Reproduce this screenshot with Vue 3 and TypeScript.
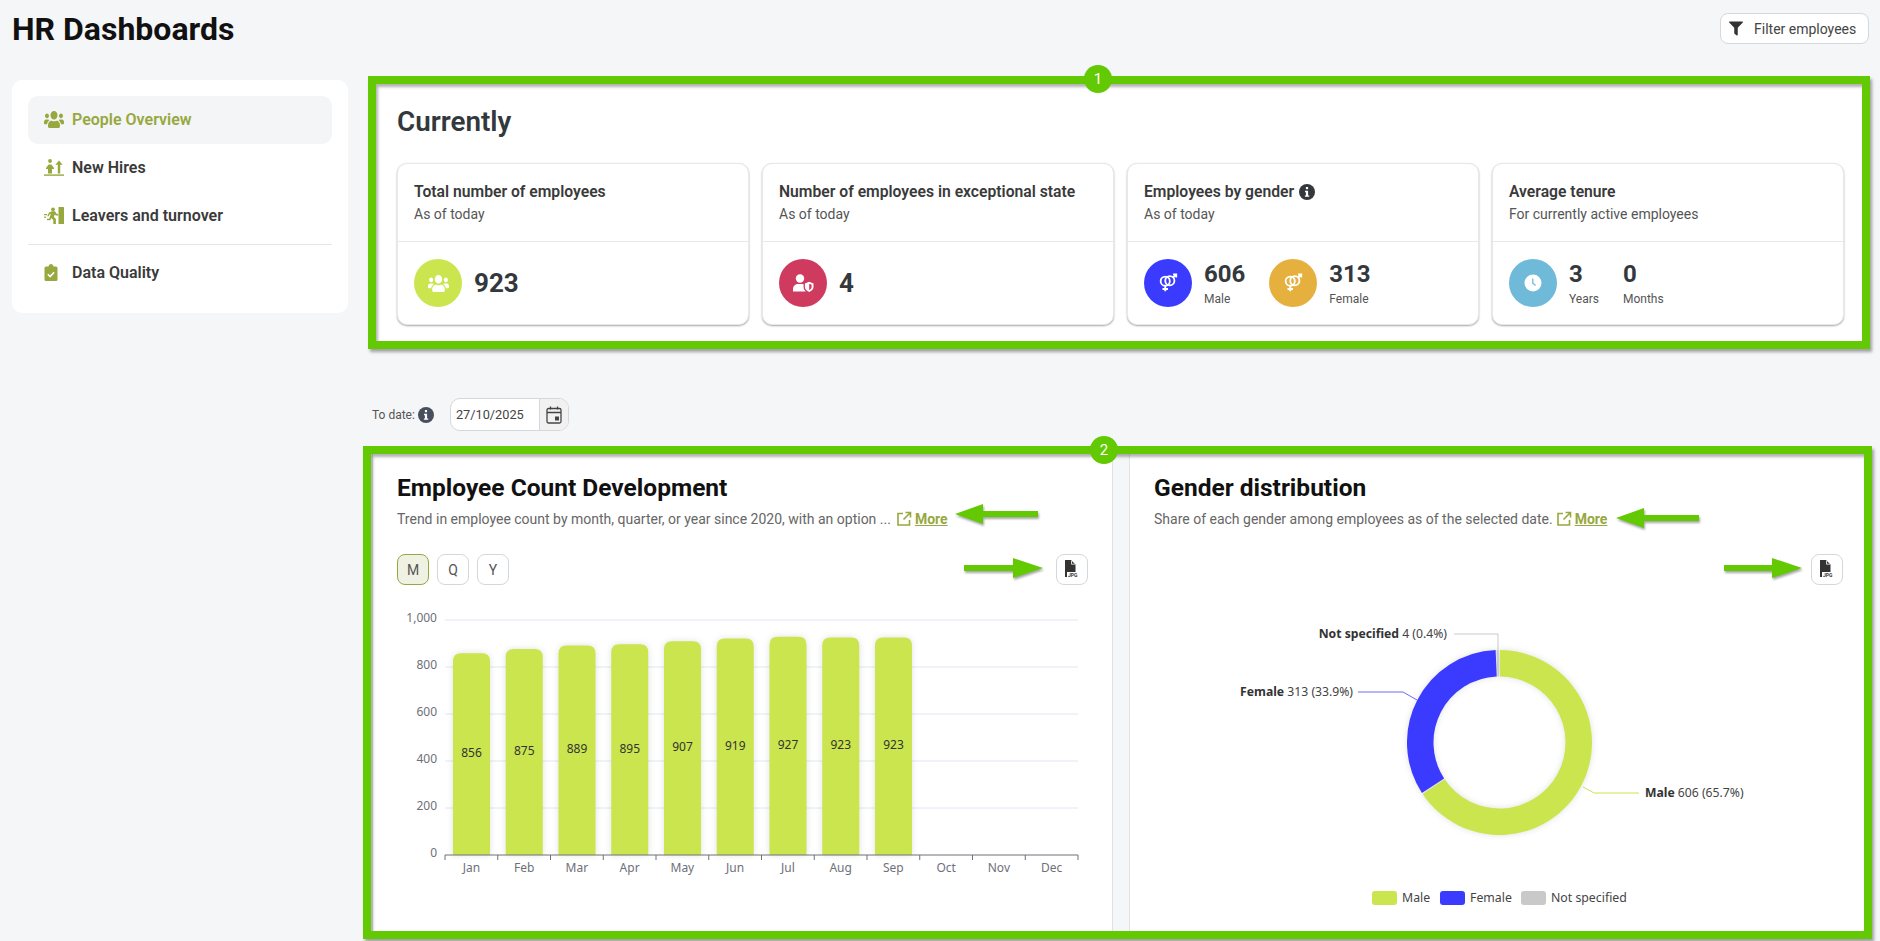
<script setup lang="ts">
const usersPath = 'M96 224c35.3 0 64-28.7 64-64s-28.7-64-64-64-64 28.7-64 64 28.7 64 64 64zm448 0c35.3 0 64-28.7 64-64s-28.7-64-64-64-64 28.7-64 64 28.7 64 64 64zm32 32h-64c-17.6 0-33.5 7.1-45.1 18.6 40.3 22.1 68.9 62 75.1 109.4h66c17.7 0 32-14.3 32-32v-32c0-35.3-28.7-64-64-64zm-256 0c61.9 0 112-50.1 112-112S381.9 32 320 32 208 82.1 208 144s50.1 112 112 112zm76.8 32h-8.3c-20.8 10-43.9 16-68.5 16s-47.6-6-68.5-16h-8.3C179.6 288 128 339.6 128 403.2V432c0 26.5 21.5 48 48 48h288c26.5 0 48-21.5 48-48v-28.8c0-63.6-51.6-115.2-115.2-115.2zm-223.7-13.4C161.5 263.1 145.6 256 128 256H64c-35.3 0-64 28.7-64 64v32c0 17.7 14.3 32 32 32h65.9c6.3-47.4 34.9-87.3 75.2-109.4z'

const months = ['Jan', 'Feb', 'Mar', 'Apr', 'May', 'Jun', 'Jul', 'Aug', 'Sep', 'Oct', 'Nov', 'Dec']
const values = [856, 875, 889, 895, 907, 919, 927, 923, 923]
const chartLeft = 48
const band = 52.75
const zeroY = 254
const pxPerUnit = 0.235

const gridLines = [0, 200, 400, 600, 800, 1000].map((v) => ({
  y: zeroY - v * pxPerUnit,
  label: v === 1000 ? '1,000' : String(v),
  value: v,
}))

const bars = values.map((v, i) => {
  const x = chartLeft + band * i + 8
  const h = v * pxPerUnit + 0.5
  const top = zeroY - h
  const w = 37
  const r = 8
  return {
    value: v,
    cx: x + w / 2,
    cy: top + h / 2,
    d: `M${x} ${zeroY}V${top + r}Q${x} ${top} ${x + r} ${top}H${x + w - r}Q${x + w} ${top} ${x + w} ${top + r}V${zeroY}Z`,
  }
})

function polar(cx: number, cy: number, r: number, deg: number): [number, number] {
  const a = ((deg - 90) * Math.PI) / 180
  return [cx + r * Math.cos(a), cy + r * Math.sin(a)]
}

function ring(start: number, end: number): string {
  const cx = 345.5
  const cy = 141.5
  const R = 92.5
  const r = 66
  const large = end - start > 180 ? 1 : 0
  const [a1, a2] = polar(cx, cy, R, start)
  const [b1, b2] = polar(cx, cy, R, end)
  const [c1, c2] = polar(cx, cy, r, end)
  const [d1, d2] = polar(cx, cy, r, start)
  return `M${a1} ${a2}A${R} ${R} 0 ${large} 1 ${b1} ${b2}L${c1} ${c2}A${r} ${r} 0 ${large} 0 ${d1} ${d2}Z`
}

const segments = [
  { color: '#cbe54e', d: ring(0.3, 236.2) },
  { color: '#3b3bff', d: ring(237, 357.6) },
  { color: '#c9c9c9', d: ring(358.2, 359.6) },
]

const legend = [
  { color: '#cbe54e', label: 'Male', x: 218, tx: 248 },
  { color: '#3b3bff', label: 'Female', x: 286, tx: 316 },
  { color: '#c9c9c9', label: 'Not specified', x: 367, tx: 397 },
]

const arrows = [
  { tip: 583, tail: 666, y: 64, dir: -1, head: 28 },
  { tip: 671, tail: 592, y: 118, dir: 1, head: 30 },
  { tip: 1244, tail: 1327, y: 68, dir: -1, head: 28 },
  { tip: 1430, tail: 1352, y: 118, dir: 1, head: 30 },
]

function arrowPath(a: { tip: number; tail: number; y: number; dir: number; head: number }): string {
  const base = a.tip - a.dir * a.head
  return `M${a.tail} ${a.y - 3}H${base}V${a.y - 10}L${a.tip} ${a.y}L${base} ${a.y + 10}V${a.y + 3}H${a.tail}Z`
}
</script>

<template>
  <div class="page">
    <header class="top">
      <h1 class="page-title">HR Dashboards</h1>
      <button class="filter-btn">
        <svg class="filter-icon" viewBox="0 0 512 512"><path d="M487.976 0H24.028C2.71 0-8.047 25.866 7.058 40.971L192 225.941V432c0 7.831 3.821 15.17 10.237 19.662l80 55.98C298.02 518.69 320 507.493 320 487.98V225.941l184.947-184.97C520.021 25.896 509.338 0 487.976 0z" /></svg>
        Filter employees
      </button>
    </header>

    <div class="layout">
      <nav class="side">
        <a class="nav-item active">
          <svg class="nav-icon" viewBox="0 32 640 448" preserveAspectRatio="none"><path :d="usersPath" /></svg>
          People Overview
        </a>
        <a class="nav-item">
          <svg class="nav-icon" viewBox="0 0 20 17">
            <circle cx="6" cy="2" r="1.9" />
            <path d="M2 9l2.6-3.4h2.8L10 9v1H8v4.4H4V10H2z" />
            <path d="M15 1.500l3.600 4.300h-2.400v8.600h-2.400V5.800h-2.400z" />
            <rect x="0" y="15.400" width="20" height="1.400" />
          </svg>
          New Hires
        </a>
        <a class="nav-item">
          <svg class="nav-icon" viewBox="0 0 20 17">
            <rect x="14.500" y="0" width="5.500" height="17" rx="0.5" />
            <circle cx="9" cy="2.300" r="1.900" />
            <path d="M5 5.500l3-1.300h3l1.800 2.800h1.500v1.500h-2.500l-1-1.200-.9 2.700 2 2v5H9.300v-4.100L7.300 11l-1 2.300H3v-1.600h2.200l1.700-5-1.200.6-1 2H3.200z" />
            <rect x="0" y="7" width="3" height="1.200" />
            <rect x="0" y="9.600" width="2" height="1.200" />
          </svg>
          Leavers and turnover
        </a>
        <hr class="nav-sep" />
        <a class="nav-item">
          <svg class="nav-icon" viewBox="0 0 20 17">
            <path d="M2 2.500h2.500C4.800 1 5.800 0 7 0s2.200 1 2.500 2.500H12a1.500 1.500 0 0 1 1.500 1.500v11.500A1.500 1.500 0 0 1 12 17H2a1.500 1.500 0 0 1-1.500-1.500V4A1.500 1.500 0 0 1 2 2.500z" />
            <path d="M3.800 10.300l2.300 2.300 4-4.400" fill="none" stroke="#fff" stroke-width="1.600" />
          </svg>
          Data Quality
        </a>
      </nav>

      <main class="main">
        <section class="panel current">
          <span class="frame frame-one"></span>
          <span class="badge badge-one">1</span>
          <h2 class="current-title">Currently</h2>
          <div class="kpis">
            <article class="kpi">
              <div class="kpi-head">
                <h3>Total number of employees</h3>
                <p>As of today</p>
              </div>
              <div class="kpi-body">
                <span class="disc lime">
                  <svg width="21" height="17" viewBox="0 32 640 448" preserveAspectRatio="none" fill="#fff"><path :d="usersPath" /></svg>
                </span>
                <strong class="big">923</strong>
              </div>
            </article>

            <article class="kpi">
              <div class="kpi-head">
                <h3>Number of employees in exceptional state</h3>
                <p>As of today</p>
              </div>
              <div class="kpi-body">
                <span class="disc crimson">
                  <svg width="22" height="18" viewBox="0 0 22 18" fill="#fff">
                    <circle cx="8" cy="4.500" r="4.200" />
                    <path d="M1 17.500v-2.500c0-3 2.500-5 5-5h4c.6 0 1.100.1 1.600.3V13c0 1.900.8 3.400 2.200 4.500z" />
                    <path d="M17.200 7.800l4.300 1.700v3.400c0 2.300-1.700 4-4.300 5-2.600-1-4.300-2.700-4.300-5V9.500z" />
                    <path d="M17.200 9.800l2.400 1v2.100c0 1.300-.9 2.300-2.400 3z" fill="#cf3a5f" />
                  </svg>
                </span>
                <strong class="big">4</strong>
              </div>
            </article>

            <article class="kpi">
              <div class="kpi-head">
                <h3>
                  Employees by gender
                  <svg class="info dark" viewBox="0 0 16 16"><circle cx="8" cy="8" r="8" /><rect x="6.900" y="3" width="2.200" height="2.200" fill="#fff" /><path d="M6 6.800h3.100v4.600H10.200v1.400H5.900v-1.400h1V8.200H6z" fill="#fff" /></svg>
                </h3>
                <p>As of today</p>
              </div>
              <div class="kpi-body stats">
                <div class="stat">
                  <span class="disc blue">
                    <svg class="gender" viewBox="0 0 24 24"><circle cx="9" cy="10" r="5" /><circle cx="14" cy="9.500" r="5" /><path d="M9 15v6M6 18.500h6M17.500 6L21 2.500M17.500 2.500H21V6" /></svg>
                  </span>
                  <div class="stat-text"><strong>606</strong><small>Male</small></div>
                </div>
                <div class="stat">
                  <span class="disc amber">
                    <svg class="gender" viewBox="0 0 24 24"><circle cx="9" cy="10" r="5" /><circle cx="14" cy="9.500" r="5" /><path d="M9 15v6M6 18.500h6M17.500 6L21 2.500M17.500 2.500H21V6" /></svg>
                  </span>
                  <div class="stat-text"><strong>313</strong><small>Female</small></div>
                </div>
              </div>
            </article>

            <article class="kpi">
              <div class="kpi-head">
                <h3>Average tenure</h3>
                <p>For currently active employees</p>
              </div>
              <div class="kpi-body stats">
                <div class="stat">
                  <span class="disc sky">
                    <svg width="18" height="18" viewBox="0 0 18 18"><circle cx="9" cy="9" r="8.500" fill="#fff" /><path d="M8.800 4.500V9.300l2.800 2.200" fill="none" stroke="#6fb9d9" stroke-width="1.300" /></svg>
                  </span>
                  <div class="stat-text"><strong>3</strong><small>Years</small></div>
                </div>
                <div class="stat-text"><strong>0</strong><small>Months</small></div>
              </div>
            </article>
          </div>
        </section>

        <div class="date-row">
          <span class="date-label">To date:</span>
          <svg class="info slate" viewBox="0 0 16 16"><circle cx="8" cy="8" r="8" /><rect x="6.900" y="3" width="2.200" height="2.200" fill="#fff" /><path d="M6 6.800h3.100v4.600H10.200v1.400H5.900v-1.400h1V8.200H6z" fill="#fff" /></svg>
          <div class="date-box">
            <span class="date-value">27/10/2025</span>
            <span class="date-addon">
              <svg width="16" height="18" viewBox="0 0 16 18" fill="none" stroke="#444" stroke-width="1.300">
                <rect x="1" y="2.500" width="14" height="14.500" rx="1.500" />
                <path d="M1 6.500h14M4.500 0.500v3M11.500 0.500v3" />
                <rect x="9" y="10.500" width="4" height="4" fill="#444" stroke="none" />
              </svg>
            </span>
          </div>
        </div>

        <section class="charts">
          <span class="frame frame-two"></span>
          <span class="badge badge-two">2</span>
          <svg class="arrows" width="1496" height="485" viewBox="0 0 1496 485">
            <path v-for="(a, i) in arrows" :key="i" :d="arrowPath(a)" />
          </svg>

          <article class="chart-card">
            <h2>Employee Count Development</h2>
            <p class="desc">
              <span>Trend in employee count by month, quarter, or year since 2020, with an option ...</span>
              <a class="more">
                <svg class="ext" viewBox="0 0 16 16"><path d="M7 2.500H2v11.500h11.500V9M9.500 1.500h5v5M14.500 1.500L7.500 8.500" /></svg>
                <u>More</u>
              </a>
            </p>
            <div class="toolbar">
              <div class="periods">
                <button class="period on">M</button>
                <button class="period">Q</button>
                <button class="period">Y</button>
              </div>
              <button class="period jpg">
                <svg width="16" height="20" viewBox="0 0 16 20">
                  <path d="M1 0h6l4.500 4.500V12H3v3H1z" fill="#333" />
                  <path d="M7.500 0.800v3.400h3.400" fill="none" stroke="#fff" stroke-width="0.800" />
                  <rect x="1" y="12" width="2" height="5" fill="#333" />
                  <text x="4" y="17" class="jpg-text">JPG</text>
                </svg>
              </button>
            </div>
            <svg class="plot" width="691" height="320" viewBox="0 0 691 320">
              <g v-for="g in gridLines" :key="g.value">
                <line v-if="g.value > 0" :x1="chartLeft" x2="681" :y1="g.y" :y2="g.y" stroke="#e0e6f1" />
                <text x="40" :y="g.y + 2" text-anchor="end" class="axis">{{ g.label }}</text>
              </g>
              <g class="bars">
                <path v-for="b in bars" :key="b.cx" :d="b.d" fill="#cbe54e" />
              </g>
              <text v-for="b in bars" :key="'v' + b.cx" :x="b.cx" :y="b.cy + 3" text-anchor="middle" class="bar-value">{{ b.value }}</text>
              <line :x1="chartLeft" x2="681" :y1="zeroY" :y2="zeroY" stroke="#6e7079" />
              <line v-for="n in 13" :key="n" :x1="chartLeft + band * (n - 1)" :x2="chartLeft + band * (n - 1)" :y1="zeroY" :y2="zeroY + 5" stroke="#6e7079" />
              <text v-for="(m, i) in months" :key="m" :x="chartLeft + band * i + band / 2" y="271" text-anchor="middle" class="axis">{{ m }}</text>
            </svg>
          </article>

          <article class="chart-card">
            <h2>Gender distribution</h2>
            <p class="desc tight">
              <span>Share of each gender among employees as of the selected date.</span>
              <a class="more">
                <svg class="ext" viewBox="0 0 16 16"><path d="M7 2.500H2v11.500h11.500V9M9.500 1.500h5v5M14.500 1.500L7.500 8.500" /></svg>
                <u>More</u>
              </a>
            </p>
            <div class="toolbar end">
              <button class="period jpg">
                <svg width="16" height="20" viewBox="0 0 16 20">
                  <path d="M1 0h6l4.500 4.500V12H3v3H1z" fill="#333" />
                  <path d="M7.500 0.800v3.400h3.400" fill="none" stroke="#fff" stroke-width="0.800" />
                  <rect x="1" y="12" width="2" height="5" fill="#333" />
                  <text x="4" y="17" class="jpg-text">JPG</text>
                </svg>
              </button>
            </div>
            <svg class="plot" width="691" height="320" viewBox="0 0 691 320">
              <g class="bars">
                <path v-for="s in segments" :key="s.color" :d="s.d" :fill="s.color" />
              </g>
              <path d="M300 33H344V49" fill="none" stroke="#c9c9c9" />
              <path d="M204 91H249L263 99" fill="none" stroke="#6a6af0" />
              <path d="M429 186L440 192H485" fill="none" stroke="#cbe54e" />
              <text x="293" y="37" text-anchor="end" class="pie-label"><tspan class="pie-strong">Not specified</tspan> 4 (0.4%)</text>
              <text x="199" y="95" text-anchor="end" class="pie-label"><tspan class="pie-strong">Female</tspan> 313 (33.9%)</text>
              <text x="491" y="196" class="pie-label"><tspan class="pie-strong">Male</tspan> 606 (65.7%)</text>
              <g v-for="l in legend" :key="l.label">
                <rect :x="l.x" y="290" width="25" height="14" rx="3" :fill="l.color" />
                <text :x="l.tx" y="301" class="legend-text">{{ l.label }}</text>
              </g>
            </svg>
          </article>
        </section>
      </main>
    </div>
  </div>
</template>

<style>
html, body { margin: 0; background: #f5f6f8; overflow: hidden; }
</style>

<style scoped>
.page { font-family: Roboto, "Liberation Sans", sans-serif; color: #3a3a3a; padding: 0 12px; height: 941px; box-sizing: border-box; background: #f5f6f8; }
.top { height: 80px; display: flex; justify-content: space-between; align-items: flex-start; box-sizing: border-box; padding-top: 13px; }
.page-title { margin: 0; font-size: 32px; line-height: 32px; font-weight: 700; color: #111; }
.filter-btn { width: 149px; height: 31px; display: flex; align-items: center; justify-content: flex-start; gap: 11px; background: #fff; border: 1px solid #d4d7dc; border-radius: 8px; font: 400 14px Roboto, sans-serif; color: #444; padding: 0 0 0 8px; margin-right: -1px; }
.filter-icon { width: 14px; height: 15px; fill: #333; }

.layout { display: grid; grid-template-columns: 336px 1fr; gap: 24px; align-items: start; }
.side { background: #fff; border-radius: 10px; padding: 16px; height: 233px; box-sizing: border-box; }
.nav-item { display: flex; align-items: center; height: 48px; box-sizing: border-box; padding: 0 16px 1px; gap: 8px; font-size: 16px; font-weight: 600; color: #3a3a3a; border-radius: 10px; }
.nav-item.active { background: #f4f5f7; color: #97a83f; }
.nav-icon { width: 20px; height: 17px; fill: #97a83f; flex: none; }
.nav-sep { border: 0; border-top: 1px solid #e4e6ea; margin: 4px 0 4px; }

.main { display: flex; flex-direction: column; min-width: 0; }
.panel { position: relative; background: #fff; height: 265px; padding: 24px 24px 0 25px; box-sizing: border-box; }
.frame { position: absolute; border: 8px solid #62c902; box-shadow: 2px 3px 3px rgba(0,0,0,.35), inset 2px 3px 3px rgba(0,0,0,.3); pointer-events: none; z-index: 3; }
.frame-one { left: -4px; right: -2px; top: -4px; bottom: -4px; }
.frame-two { left: -9px; right: -4px; top: -4px; bottom: -4px; }
.badge { position: absolute; width: 28px; height: 28px; border-radius: 50%; background: #62c902; color: #fff; font-size: 15px; display: flex; align-items: center; justify-content: center; z-index: 4; }
.badge-one { left: 712px; top: -15px; }
.badge-two { left: 718px; top: -14px; }
.current-title { margin: 0 0 23px; font-size: 27.8px; line-height: 36px; font-weight: 600; color: #33383d; }
.kpis { display: grid; grid-template-columns: repeat(4, 1fr); gap: 13px; }
.kpi { height: 162px; box-sizing: border-box; border: 1px solid #e6e8ec; border-radius: 10px; box-shadow: 0 1px 2px rgba(0,0,0,.35); background: #fff; }
.kpi-head { height: 78px; box-sizing: border-box; padding: 18px 16px 0; border-bottom: 1px solid #e6e8ec; }
.kpi-head h3 { margin: 0; font-size: 15.7px; line-height: 20px; font-weight: 600; color: #3a3a3a; display: flex; align-items: center; gap: 5px; }
.kpi-head p { margin: 3px 0 0; font-size: 14px; line-height: 18px; color: #555; }
.kpi-body { display: flex; align-items: center; padding: 17px 16px 16px; gap: 12px; }
.kpi-body.stats { gap: 24px; }
.disc { width: 48px; height: 48px; border-radius: 50%; display: flex; align-items: center; justify-content: center; flex: none; }
.lime { background: #cbe54e; }
.crimson { background: #cf3a5f; }
.blue { background: #3b3bff; }
.amber { background: #e6b03f; }
.sky { background: #6fb9d9; }
.gender { width: 22px; height: 22px; fill: none; stroke: #fff; stroke-width: 2; }
.big { font-size: 26px; font-weight: 700; color: #33383d; }
.stat { display: flex; align-items: center; gap: 12px; }
.stat-text { display: flex; flex-direction: column; }
.stat-text strong { font-size: 24px; line-height: 30px; font-weight: 700; color: #33383d; }
.stat-text small { font-size: 12px; line-height: 16px; margin-top: 2px; color: #555; }
.info { width: 16px; height: 16px; flex: none; }
.info.dark { fill: #33383d; }
.info.slate { fill: #47505c; }

.date-row { display: flex; align-items: center; margin: 53px 0 19px; height: 33px; }
.date-label { font-size: 12px; color: #555; margin-right: 3px; }
.date-box { margin-left: 16px; width: 119px; height: 33px; box-sizing: border-box; border: 1px solid #d4d7dc; border-radius: 10px; background: #fff; display: flex; overflow: hidden; }
.date-value { flex: 1; font-size: 12.75px; line-height: 31px; padding-left: 5px; color: #444; }
.date-addon { width: 28px; background: #f1f1f1; border-left: 1px solid #d4d7dc; display: flex; align-items: center; justify-content: center; }

.charts { position: relative; display: grid; grid-template-columns: 741px 1fr; gap: 16px; }
.arrows { position: absolute; left: 0; top: 0; z-index: 3; pointer-events: none; fill: #62c902; filter: drop-shadow(1px 2px 1px rgba(0,0,0,.35)); }
.chart-card { height: 485px; box-sizing: border-box; background: #fff; border: 1px solid #dfe2e6; padding: 21px 24px 0; min-width: 0; }
.chart-card h2 { margin: 0; font-size: 24.5px; line-height: 32px; font-weight: 700; color: #111; }
.desc { margin: 5px 0 0; font-size: 14px; line-height: 20px; color: #666; display: flex; align-items: center; gap: 5px; }
.desc.tight { gap: 3px; }
.more { display: inline-flex; align-items: center; gap: 3px; color: #97a83f; font-weight: 700; }
.ext { width: 16px; height: 16px; fill: none; stroke: #97a83f; stroke-width: 1.6; }
.toolbar { display: flex; justify-content: space-between; height: 31px; margin-top: 25px; }
.toolbar.end { justify-content: flex-end; }
.periods { display: flex; gap: 8px; }
.period { width: 32px; height: 31px; padding: 0; background: #fff; border: 1px solid #d4d7dc; border-radius: 8px; font: 400 14px Roboto, sans-serif; color: #555; display: flex; align-items: center; justify-content: center; }
.period.on { background: #eff1e2; border-color: #97a83f; }
.jpg-text { font: 700 5px Roboto, sans-serif; fill: #333; }
.plot { display: block; margin-top: 16px; overflow: visible; }
.axis { font: 12px "Noto Sans", sans-serif; fill: #6e7079; }
.bar-value { font: 12px "Noto Sans", sans-serif; fill: #333; }
.bars { filter: drop-shadow(0 0 3px rgba(0,0,0,.12)); }
.pie-label { font: 12.2px "Noto Sans", sans-serif; fill: #444; }
.pie-strong { font-weight: 700; fill: #333; }
.legend-text { font: 12.3px "Noto Sans", sans-serif; fill: #444; }
</style>
